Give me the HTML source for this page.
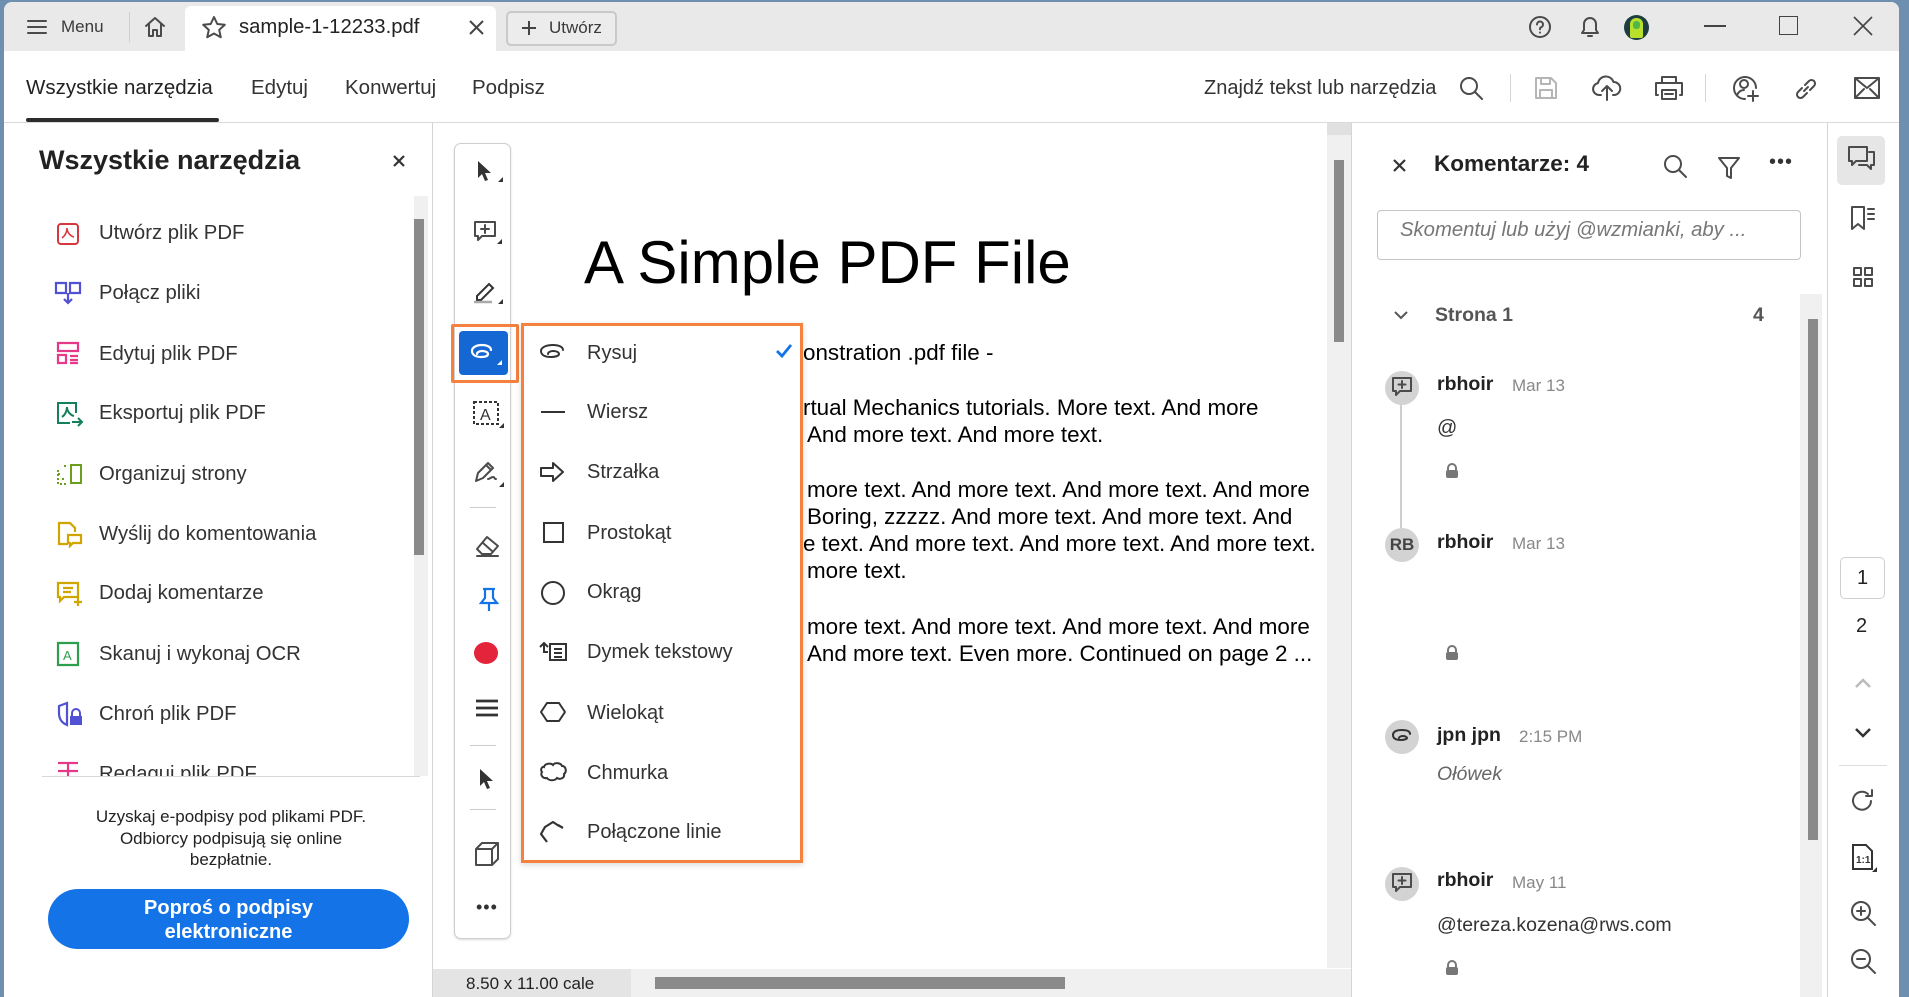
<!DOCTYPE html>
<html><head><meta charset="utf-8"><style>
*{margin:0;padding:0;box-sizing:border-box}
body{width:1909px;height:993px;overflow:hidden;background:#6f8fb0;font-family:"Liberation Sans",Arial,sans-serif;color:#2c2c2c;position:relative}
.a{position:absolute}
.win{position:absolute;left:4px;top:2px;width:1895px;height:995px;background:#fff;border-radius:8px 8px 0 0;overflow:hidden}
.t{position:absolute;white-space:nowrap;line-height:1}
svg{position:absolute;overflow:visible}
.ic{fill:none;stroke:#4b4b4b;stroke-width:2;stroke-linecap:round;stroke-linejoin:round}
</style></head><body>
<div class="win">
<!-- tab bar -->
<div class="a" style="left:0;top:0;width:1895px;height:49px;background:#e9e9e9"></div>
<div class="a" style="left:181px;top:4px;width:311px;height:46px;background:#fff;border-radius:6px 6px 0 0"></div>
<svg style="left:23px;top:17px" width="20" height="16" class="ic"><path d="M1 2h18M1 8h18M1 14h18" stroke="#4b4b4b" stroke-width="2"/></svg>
<div class="t" style="left:57px;top:16px;font-size:17px;color:#3a3a3a">Menu</div>
<div class="a" style="left:125px;top:10px;width:1px;height:30px;background:#cfcfcf"></div>
<svg style="left:140px;top:14px" width="22" height="22" class="ic"><path d="M2 10L11 2l9 8M5 8v12h4v-6h4v6h4V8"/></svg>
<svg style="left:197px;top:13px" width="26" height="26" class="ic"><path d="M13 2l3.3 7 7.5.8-5.6 5.1 1.6 7.4L13 18.5 6.2 22.3l1.6-7.4L2.2 9.8 9.7 9z"/></svg>
<div class="t" style="left:235px;top:15px;font-size:20.3px;color:#222">sample-1-12233.pdf</div>
<svg style="left:465px;top:18px" width="15" height="15"><path d="M1 1l13 13M14 1L1 14" stroke="#444" stroke-width="2"/></svg>
<div class="a" style="left:502px;top:9px;width:111px;height:35px;border:2px solid #c9c9c9;border-radius:5px;background:#ececec"></div>
<svg style="left:517px;top:18px" width="16" height="16"><path d="M8 1v14M1 8h14" stroke="#444" stroke-width="2"/></svg>
<div class="t" style="left:545px;top:17px;font-size:17px;color:#3a3a3a">Utwórz</div>
<!-- right top icons -->
<svg style="left:1524px;top:13px" width="24" height="24" class="ic"><circle cx="12" cy="12" r="10"/><path d="M9 9.5a3 3 0 1 1 4 2.8c-1 .4-1 1-1 2M12 17.5v.1"/></svg>
<svg style="left:1574px;top:12px" width="24" height="26" class="ic"><path d="M4 19h16l-2-3v-6a6 6 0 0 0-12 0v6zM10 22h4"/></svg>
<div class="a" style="left:1620px;top:13px;width:25px;height:25px;border-radius:50%;background:#1e3d40;overflow:hidden"><div class="a" style="left:6px;top:3px;width:13px;height:20px;background:#b9e02a;border-radius:6px 6px 2px 2px"></div><div class="a" style="left:9px;top:6px;width:7px;height:8px;background:#4fb848;border-radius:3px"></div></div>
<div class="a" style="left:1700px;top:23px;width:22px;height:2px;background:#444"></div>
<div class="a" style="left:1775px;top:14px;width:19px;height:19px;border:1.6px solid #444"></div>
<svg style="left:1849px;top:14px" width="20" height="20"><path d="M1 1l18 18M19 1L1 19" stroke="#444" stroke-width="1.6"/></svg>
<!-- toolbar -->
<div class="t" style="left:22px;top:76px;font-size:20.5px;color:#222">Wszystkie narzędzia</div>
<div class="a" style="left:22px;top:116px;width:193px;height:4px;background:#2c2c2c;border-radius:2px"></div>
<div class="t" style="left:247px;top:76px;font-size:20.5px;color:#333">Edytuj</div>
<div class="t" style="left:341px;top:76px;font-size:20.5px;color:#333">Konwertuj</div>
<div class="t" style="left:468px;top:76px;font-size:20.5px;color:#333">Podpisz</div>
<div class="t" style="left:1200px;top:76px;font-size:20px;color:#333">Znajdź tekst lub narzędzia</div>
<svg style="left:1455px;top:74px" width="26" height="26" class="ic"><circle cx="10" cy="10" r="8"/><path d="M16 16l7 7"/></svg>
<div class="a" style="left:1506px;top:72px;width:1px;height:28px;background:#d5d5d5"></div>
<svg style="left:1530px;top:74px" width="24" height="24"><path d="M2 2h15l5 5v15H2zM7 2v6h9V2M6 22v-8h12v8" fill="none" stroke="#b5b5b5" stroke-width="2" stroke-linejoin="round"/></svg>
<svg style="left:1588px;top:72px" width="30" height="28" class="ic"><path d="M9 21H7a6 6 0 0 1-1-11.9A8 8 0 0 1 21.5 8 6.5 6.5 0 0 1 22 21h-1M15 26V13M10 17l5-5 5 5"/></svg>
<svg style="left:1651px;top:73px" width="28" height="26" class="ic"><path d="M7 8V2h14v6M3 20H1V8h26v12h-2M7 15h14v9H7zM10 19h8"/></svg>
<div class="a" style="left:1701px;top:72px;width:1px;height:28px;background:#d5d5d5"></div>
<svg style="left:1727px;top:72px" width="28" height="28" class="ic"><path d="M14 25A11 11 0 1 1 25 14M9 10a4 4 0 1 1 8 0 4 4 0 0 1-8 0M6 21c2-4 5-5 7-5M22 17v10M17 22h10"/></svg>
<svg style="left:1789px;top:74px" width="26" height="26" class="ic"><path d="M11 15l4-4M9 12l-4 4a3.5 3.5 0 0 0 5 5l4-4M17 14l4-4a3.5 3.5 0 0 0-5-5l-4 4"/></svg>
<svg style="left:1850px;top:75px" width="26" height="22" class="ic"><path d="M1 1h24v20H1zM1 1l12 10L25 1M1 21l9-9M25 21l-9-9"/></svg>
<div class="a" style="left:0;top:120px;width:1895px;height:1px;background:#dadada"></div>
<!-- left panel -->
<div class="t" style="left:35px;top:145px;font-size:27px;font-weight:bold;color:#222">Wszystkie narzędzia</div>
<svg style="left:389px;top:153px" width="12" height="12"><path d="M1 1l10 10M11 1L1 11" stroke="#333" stroke-width="2.2"/></svg>
<div class="a" style="left:410px;top:194px;width:14px;height:580px;background:#f0f0f0"></div>
<div class="a" style="left:410px;top:217px;width:10px;height:336px;background:#8a8a8a"></div>
<div class="a" style="left:38px;top:774px;width:378px;height:1px;background:#d8d8d8"></div>
<div class="a" style="left:0;top:190px;width:410px;height:584px;overflow:hidden">
<svg style="left:52px;top:30px" width="24" height="24"><rect x="2" y="2" width="20" height="20" rx="3" fill="none" stroke="#d7373f" stroke-width="2"/><path d="M6 16c3-2 5-6 5-10 0 4 3 8 7 9" fill="none" stroke="#d7373f" stroke-width="1.6"/></svg>
<div class="t" style="left:95px;top:31px;font-size:20.3px;color:#333">Utwórz plik PDF</div>
<svg style="left:50px;top:89px" width="28" height="26"><path d="M2 2h10v10H2zM16 2h10v10H16zM14 12v10M10 18l4 4 4-4" fill="none" stroke="#5151d3" stroke-width="2.2"/></svg>
<div class="t" style="left:95px;top:91px;font-size:20.3px;color:#333">Połącz pliki</div>
<svg style="left:52px;top:149px" width="24" height="24"><path d="M2 2h20v8H2zM2 14h8v8H2zM14 15h8M14 19h8M14 22h8" fill="none" stroke="#e63888" stroke-width="2.2"/></svg>
<div class="t" style="left:95px;top:152px;font-size:20.3px;color:#333">Edytuj plik PDF</div>
<svg style="left:52px;top:209px" width="28" height="26"><path d="M14 22H2V2h18v10M6 16c3-2 5-6 5-10 0 4 3 8 7 9M16 21h10M22 17l4 4-4 4" fill="none" stroke="#12805c" stroke-width="2"/></svg>
<div class="t" style="left:95px;top:211px;font-size:20.3px;color:#333">Eksportuj plik PDF</div>
<svg style="left:52px;top:270px" width="28" height="24"><path d="M2 8v14h10M2 12h2M6 17h2M8 4h4" fill="none" stroke="#6d9f1f" stroke-width="2" stroke-dasharray="2 2"/><path d="M15 3h10v18H15z" fill="none" stroke="#6d9f1f" stroke-width="2"/></svg>
<div class="t" style="left:95px;top:272px;font-size:20.3px;color:#333">Organizuj strony</div>
<svg style="left:52px;top:329px" width="28" height="26"><path d="M12 23H3V2h11l5 5v4M12 14h13v8h-8l-3 3v-3h-2z" fill="none" stroke="#d1a500" stroke-width="2.2"/></svg>
<div class="t" style="left:95px;top:332px;font-size:20.3px;color:#333">Wyślij do komentowania</div>
<svg style="left:52px;top:389px" width="28" height="26"><path d="M2 2h20v14H8l-4 4v-4H2zM7 7h10M7 11h8M22 16v9M18 21h8" fill="none" stroke="#d1a500" stroke-width="2.2"/></svg>
<div class="t" style="left:95px;top:391px;font-size:20.3px;color:#333">Dodaj komentarze</div>
<svg style="left:52px;top:449px" width="24" height="26"><path d="M2 2h20v22H2z" fill="none" stroke="#2d9d4e" stroke-width="2.2"/><text x="7" y="19" font-size="13" fill="#2d9d4e" font-family="Liberation Sans">A</text></svg>
<div class="t" style="left:95px;top:452px;font-size:20.3px;color:#333">Skanuj i wykonaj OCR</div>
<svg style="left:52px;top:509px" width="28" height="26"><path d="M11 2L3 5v7c0 6 3 10 8 12V2z" fill="none" stroke="#5151d3" stroke-width="2.2"/><rect x="14" y="15" width="12" height="9" fill="#5151d3"/><path d="M16 15v-3a4 4 0 0 1 8 0v3" fill="none" stroke="#5151d3" stroke-width="2"/></svg>
<div class="t" style="left:95px;top:512px;font-size:20.3px;color:#333">Chroń plik PDF</div>
<svg style="left:52px;top:569px" width="24" height="20"><path d="M2 2h20M12 2v14M2 10h20" fill="none" stroke="#e63888" stroke-width="2.2"/></svg>
<div class="t" style="left:95px;top:572px;font-size:20.3px;color:#333">Redaguj plik PDF</div>
</div>
<div class="t" style="left:38px;top:804px;width:378px;text-align:center;font-size:17px;line-height:21.5px;white-space:normal;color:#222">Uzyskaj e-podpisy pod plikami PDF.<br>Odbiorcy podpisują się online<br>bezpłatnie.</div>
<div class="a" style="left:44px;top:887px;width:361px;height:60px;background:#1473e6;border-radius:30px;color:#fff;font-weight:bold;font-size:20px;text-align:center;line-height:24px;padding-top:7px">Poproś o podpisy<br>elektroniczne</div>
<div class="a" style="left:428px;top:120px;width:1px;height:875px;background:#d5d5d5"></div>
<!-- center -->
<div class="a" style="left:1323px;top:121px;width:24px;height:845px;background:#f0f0f0"></div>
<div class="a" style="left:1330px;top:158px;width:10px;height:182px;background:#8a8a8a"></div>
<div class="a" style="left:1323px;top:121px;width:24px;height:12px;background:#e0e0e0"></div>
<div class="a" style="left:429px;top:967px;width:918px;height:28px;background:#f0f0f0"></div>
<div class="a" style="left:429px;top:967px;width:198px;height:28px;background:#e4e4e4"></div>
<div class="t" style="left:462px;top:973px;font-size:17px;color:#222">8.50 x 11.00 cale</div>
<div class="a" style="left:651px;top:975px;width:410px;height:12px;background:#8a8a8a"></div>
<div class="t" style="left:580px;top:231px;font-size:60px;color:#000">A Simple PDF File</div>
<div style="position:absolute;left:799px;top:0;font-size:22.4px;color:#000;line-height:1">
<div class="t" style="left:0;top:340px">onstration .pdf file -</div>
<div class="t" style="left:0;top:395px">rtual Mechanics tutorials. More text. And more</div>
<div class="t" style="left:4px;top:422px">And more text. And more text.</div>
<div class="t" style="left:4px;top:477px">more text. And more text. And more text. And more</div>
<div class="t" style="left:4px;top:504px">Boring, zzzzz. And more text. And more text. And</div>
<div class="t" style="left:0;top:531px">e text. And more text. And more text. And more text.</div>
<div class="t" style="left:4px;top:558px">more text.</div>
<div class="t" style="left:4px;top:614px">more text. And more text. And more text. And more</div>
<div class="t" style="left:4px;top:641px">And more text. Even more. Continued on page 2 ...</div>
</div>
<!-- tool strip -->
<div class="a" style="left:450px;top:141px;width:57px;height:796px;border:1.5px solid #cfcfcf;border-radius:7px;background:#fff;box-shadow:0 1px 2px rgba(0,0,0,.15)"></div>
<svg style="left:472px;top:158px" width="30" height="28"><path d="M2 1v17l4-4 3 7 3-1-3-7h6z" fill="#333"/><path d="M22 22h5v-5z" fill="#333"/></svg>
<svg style="left:469px;top:218px" width="34" height="30" class="ic"><path d="M2 2h20v14H9l-4 4v-4H2zM12 5v8M8 9h8"/><path d="M24 24h5v-5z" fill="#333" stroke="none"/></svg>
<svg style="left:468px;top:276px" width="34" height="30"><path d="M5 18L17 6l4 4-12 12H5z" fill="none" stroke="#333" stroke-width="2"/><path d="M2 24h18" stroke="#aaa" stroke-width="2.5"/><path d="M26 26h5v-5z" fill="#333"/></svg>
<div class="a" style="left:447px;top:322px;width:68px;height:59px;border:3.5px solid #f5813f;border-radius:2px"></div>
<div class="a" style="left:455px;top:329px;width:49px;height:44px;background:#1567d3;border-radius:4px"></div>
<svg style="left:465px;top:341px" width="34" height="26"><path d="M22 7c0-3-4-5-9-5S3 4 3 8s4 6 9 6c4 0 7-1 7-3s-3-3-6-3c-2 0-5 1-5 3" fill="none" stroke="#fff" stroke-width="2.2" stroke-linecap="round"/><path d="M28 22h5v-5z" fill="#fff"/></svg>
<svg style="left:468px;top:398px" width="34" height="30"><rect x="2" y="2" width="24" height="22" fill="none" stroke="#333" stroke-width="2" stroke-dasharray="3 2"/><text x="8" y="20" font-size="16" font-family="Liberation Sans" fill="#333">A</text><path d="M27 28h5v-5z" fill="#333"/></svg>
<svg style="left:468px;top:457px" width="34" height="30" class="ic"><path d="M4 22l2-8L16 4l5 5-10 10zM14 6l5 5M16 20c2 0 3-2 5-2s1 2 3 2"/><path d="M27 28h5v-5z" fill="#333" stroke="none"/></svg>
<div class="a" style="left:466px;top:505px;width:26px;height:1px;background:#ccc"></div>
<svg style="left:470px;top:530px" width="30" height="26" class="ic"><path d="M3 17L13 5l11 9-7 8H8zM9 11l9 8M3 24h21"/></svg>
<svg style="left:473px;top:585px" width="24" height="26"><path d="M6 2h12M8 2v9l-4 5h16l-4-5V2M12 16v8" fill="none" stroke="#1473e6" stroke-width="2.2"/></svg>
<div class="a" style="left:470px;top:640px;width:24px;height:22px;border-radius:50%;background:#e3243b"></div>
<svg style="left:471px;top:697px" width="24" height="18"><path d="M1 2h22M1 9h22M1 16h22" stroke="#333" stroke-width="2.8"/></svg>
<div class="a" style="left:466px;top:743px;width:26px;height:1px;background:#ccc"></div>
<svg style="left:474px;top:766px" width="20" height="24"><path d="M2 1v17l4-4 3 7 3-1-3-7h6z" fill="#333"/></svg>
<div class="a" style="left:466px;top:807px;width:26px;height:1px;background:#ccc"></div>
<svg style="left:470px;top:839px" width="28" height="26" class="ic"><path d="M2 8h16v16H2zM2 8l6-6h16l-6 6M24 2v16l-6 6"/></svg>
<div class="t" style="left:472px;top:896px;font-size:18px;color:#333;letter-spacing:1px">•••</div>
<!-- dropdown -->
<div class="a" style="left:517px;top:321px;width:282px;height:540px;background:#fff;border:3.5px solid #f5813f;box-shadow:0 2px 6px rgba(0,0,0,.15)"></div>
<svg style="left:535px;top:341px" width="30" height="20"><path d="M24 7c0-3-4-5-10-5S2 4 2 8s4 6 10 6c4 0 8-1 8-3s-3-3-6-3c-2 0-5 1-5 3" fill="none" stroke="#333" stroke-width="2" stroke-linecap="round"/></svg>
<div class="t" style="left:583px;top:341px;font-size:20px;color:#333">Rysuj</div>
<svg style="left:771px;top:341px" width="18" height="16"><path d="M2 8l5 5L16 2" fill="none" stroke="#1473e6" stroke-width="2.8"/></svg>
<div class="a" style="left:537px;top:409px;width:24px;height:2px;background:#333"></div>
<div class="t" style="left:583px;top:400px;font-size:20px;color:#333">Wiersz</div>
<svg style="left:535px;top:459px" width="28" height="22"><path d="M2 7h12V2l10 9-10 9v-5H2z" fill="none" stroke="#333" stroke-width="2" stroke-linejoin="round"/></svg>
<div class="t" style="left:583px;top:460px;font-size:20px;color:#333">Strzałka</div>
<div class="a" style="left:539px;top:520px;width:21px;height:21px;border:2px solid #333"></div>
<div class="t" style="left:583px;top:521px;font-size:20px;color:#333">Prostokąt</div>
<div class="a" style="left:537px;top:579px;width:24px;height:24px;border:2px solid #333;border-radius:50%"></div>
<div class="t" style="left:583px;top:580px;font-size:20px;color:#333">Okrąg</div>
<svg style="left:534px;top:639px" width="30" height="22"><path d="M2 6l4-4 4 4M6 2v9h4M12 3h16v16H12zM16 8h8M16 12h8M16 16h8" fill="none" stroke="#333" stroke-width="2"/></svg>
<div class="t" style="left:583px;top:640px;font-size:20px;color:#333">Dymek tekstowy</div>
<svg style="left:535px;top:699px" width="28" height="22"><path d="M8 2h12l6 9-6 9H8L2 11z" fill="none" stroke="#333" stroke-width="2" stroke-linejoin="round"/></svg>
<div class="t" style="left:583px;top:701px;font-size:20px;color:#333">Wielokąt</div>
<svg style="left:534px;top:759px" width="30" height="22"><path d="M6 6c1-4 7-4 9-2 2-3 8-2 9 1 4 0 5 6 2 8 1 4-4 6-7 4-2 3-8 3-10 0-4 1-7-3-5-6-2-2 0-6 2-5z" fill="none" stroke="#333" stroke-width="2"/></svg>
<div class="t" style="left:583px;top:761px;font-size:20px;color:#333">Chmurka</div>
<svg style="left:535px;top:818px" width="28" height="24"><path d="M20 6l-6-4-8 5-4 7 6 8M24 8l-5-3" fill="none" stroke="#333" stroke-width="2.2" stroke-linejoin="round"/></svg>
<div class="t" style="left:583px;top:820px;font-size:20px;color:#333">Połączone linie</div>
<!-- right comments panel -->
<div class="a" style="left:1347px;top:121px;width:1px;height:875px;background:#d5d5d5"></div>
<svg style="left:1389px;top:157px" width="13" height="13"><path d="M1 1l11 11M12 1L1 12" stroke="#333" stroke-width="2.2"/></svg>
<div class="t" style="left:1430px;top:151px;font-size:22.5px;font-weight:bold;color:#222">Komentarze: 4</div>
<svg style="left:1659px;top:152px" width="26" height="26" class="ic"><circle cx="10" cy="10" r="8"/><path d="M16 16l7 7"/></svg>
<svg style="left:1713px;top:154px" width="24" height="24" class="ic"><path d="M2 2h20l-8 10v10l-4-2v-8z"/></svg>
<div class="t" style="left:1765px;top:150px;font-size:20px;color:#333;letter-spacing:1px">•••</div>
<div class="a" style="left:1373px;top:208px;width:424px;height:50px;border:1.5px solid #c5c5c5;border-radius:4px"></div>
<div class="t" style="left:1396px;top:218px;font-size:20.3px;font-style:italic;color:#777">Skomentuj lub użyj @wzmianki, aby ...</div>
<div class="a" style="left:1796px;top:292px;width:22px;height:705px;background:#f0f0f0"></div>
<div class="a" style="left:1804px;top:317px;width:10px;height:521px;background:#8a8a8a"></div>
<svg style="left:1389px;top:307px" width="16" height="12"><path d="M2 3l6 6 6-6" fill="none" stroke="#555" stroke-width="2"/></svg>
<div class="t" style="left:1431px;top:304px;font-size:19.5px;font-weight:bold;color:#555">Strona 1</div>
<div class="t" style="left:1749px;top:304px;font-size:19.5px;font-weight:bold;color:#555">4</div>
<div class="a" style="left:1396px;top:402px;width:2px;height:124px;background:#cfcfcf"></div>
<div class="a" style="left:1381px;top:369px;width:34px;height:34px;border-radius:50%;background:#d3d3d3"></div>
<svg style="left:1387px;top:374px" width="22" height="24" class="ic"><path d="M2 2h18v13H9l-4 4v-4H2zM11 5v7M7.5 8.5h7"/></svg>
<div class="t" style="left:1433px;top:373px;font-size:19.5px;font-weight:bold;color:#222">rbhoir</div>
<div class="t" style="left:1508px;top:375px;font-size:17px;color:#888">Mar 13</div>
<div class="t" style="left:1433px;top:416px;font-size:20px;color:#333">@</div>
<svg style="left:1441px;top:461px" width="14" height="16"><path d="M3 7V5a4 4 0 0 1 8 0v2" fill="none" stroke="#777" stroke-width="2"/><rect x="1" y="7" width="12" height="8" rx="2" fill="#777"/></svg>
<div class="a" style="left:1381px;top:526px;width:34px;height:34px;border-radius:50%;background:#d3d3d3;font-weight:bold;font-size:17px;color:#444;text-align:center;line-height:34px">RB</div>
<div class="t" style="left:1433px;top:531px;font-size:19.5px;font-weight:bold;color:#222">rbhoir</div>
<div class="t" style="left:1508px;top:533px;font-size:17px;color:#888">Mar 13</div>
<svg style="left:1441px;top:643px" width="14" height="16"><path d="M3 7V5a4 4 0 0 1 8 0v2" fill="none" stroke="#777" stroke-width="2"/><rect x="1" y="7" width="12" height="8" rx="2" fill="#777"/></svg>
<div class="a" style="left:1381px;top:718px;width:34px;height:34px;border-radius:50%;background:#d3d3d3"></div>
<svg style="left:1386px;top:726px" width="26" height="20"><path d="M20 6c0-3-3-4-8-4S3 3 3 7s4 5 8 5c3 0 6-1 6-2s-2-2-4-2c-2 0-4 1-4 2" fill="none" stroke="#333" stroke-width="2" stroke-linecap="round"/></svg>
<div class="t" style="left:1433px;top:724px;font-size:19.5px;font-weight:bold;color:#222">jpn jpn</div>
<div class="t" style="left:1515px;top:726px;font-size:17px;color:#888">2:15 PM</div>
<div class="t" style="left:1433px;top:763px;font-size:19.5px;font-style:italic;color:#666">Ołówek</div>
<div class="a" style="left:1381px;top:865px;width:34px;height:34px;border-radius:50%;background:#d3d3d3"></div>
<svg style="left:1387px;top:870px" width="22" height="24" class="ic"><path d="M2 2h18v13H9l-4 4v-4H2zM11 5v7M7.5 8.5h7"/></svg>
<div class="t" style="left:1433px;top:869px;font-size:19.5px;font-weight:bold;color:#222">rbhoir</div>
<div class="t" style="left:1508px;top:872px;font-size:17px;color:#888">May 11</div>
<div class="t" style="left:1433px;top:914px;font-size:19.5px;color:#333">@tereza.kozena@rws.com</div>
<svg style="left:1441px;top:958px" width="14" height="16"><path d="M3 7V5a4 4 0 0 1 8 0v2" fill="none" stroke="#777" stroke-width="2"/><rect x="1" y="7" width="12" height="8" rx="2" fill="#777"/></svg>
<!-- far right sidebar -->
<div class="a" style="left:1823px;top:121px;width:1px;height:875px;background:#d5d5d5"></div>
<div class="a" style="left:1833px;top:134px;width:48px;height:49px;background:#e6e6e6;border-radius:5px"></div>
<svg style="left:1843px;top:143px" width="30" height="30" class="ic"><path d="M2 2h18v14H9l-4 4v-4H2zM22 7h5v13h-3v4l-4-4h-8"/></svg>
<svg style="left:1846px;top:203px" width="26" height="28" class="ic"><path d="M2 2h12v22l-6-5-6 5zM18 4h6M18 9h6M18 14h6"/></svg>
<svg style="left:1848px;top:264px" width="22" height="22" class="ic"><rect x="2" y="2" width="7" height="7"/><rect x="13" y="2" width="7" height="7"/><rect x="2" y="13" width="7" height="7"/><rect x="13" y="13" width="7" height="7"/></svg>
<div class="a" style="left:1836px;top:555px;width:45px;height:42px;border:1.5px solid #cfcfcf;border-radius:5px;text-align:center;font-size:20px;line-height:40px;color:#222">1</div>
<div class="t" style="left:1852px;top:614px;font-size:20px;color:#222">2</div>
<svg style="left:1850px;top:676px" width="18" height="12"><path d="M2 9l7-7 7 7" fill="none" stroke="#bbb" stroke-width="2.5"/></svg>
<svg style="left:1850px;top:724px" width="18" height="12"><path d="M2 3l7 7 7-7" fill="none" stroke="#333" stroke-width="2.5"/></svg>
<div class="a" style="left:1835px;top:763px;width:48px;height:1px;background:#ddd"></div>
<svg style="left:1846px;top:786px" width="26" height="26" class="ic"><path d="M21 13a9 9 0 1 1-3-7M22 2v6h-6"/></svg>
<svg style="left:1847px;top:841px" width="26" height="30"><path d="M2 2h13l6 6v18H2z" fill="none" stroke="#333" stroke-width="2"/><text x="5" y="20" font-size="10" font-weight="bold" font-family="Liberation Sans" fill="#333">1:1</text><path d="M21 29h5v-5z" fill="#333"/></svg>
<svg style="left:1846px;top:898px" width="28" height="28" class="ic"><circle cx="11" cy="11" r="9"/><path d="M18 18l7 7M11 7v8M7 11h8"/></svg>
<svg style="left:1846px;top:946px" width="28" height="28" class="ic"><circle cx="11" cy="11" r="9"/><path d="M18 18l7 7M7 11h8"/></svg>
</div>
</body></html>
